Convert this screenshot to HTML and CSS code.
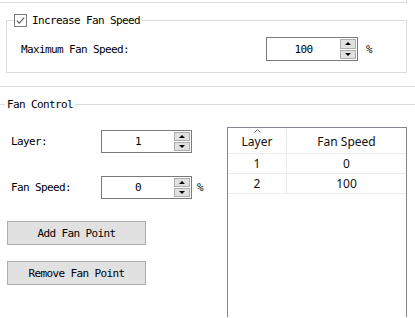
FILE: index.html
```html
<!DOCTYPE html>
<html>
<head>
<meta charset="utf-8">
<link rel="stylesheet" href="styles.css">
</head>
<body>
<div class="prev-box"></div>
<fieldset class="group group-speed">
  <legend class="legend check-legend">
    <svg class="checkbox" width="13" height="13" viewBox="0 0 13 13"><rect x="0.5" y="0.5" width="12" height="12" fill="#fff" stroke="#7a7a7a"/><path d="M2.8 6.6 L5.3 9.1 L10.2 3.6" fill="none" stroke="#5a5a5a" stroke-width="1.1"/></svg>
    <span>Increase Fan Speed</span>
  </legend>
  <div class="row max-row">
    <span class="label label-max">Maximum Fan Speed:</span>
    <div class="spin spin-wide">
      <span class="spin-val">100</span>
      <span class="spin-btns"><span class="sb up"></span><span class="sb down"></span></span>
    </div>
    <span class="unit">%</span>
  </div>
</fieldset>
<div class="sep"></div>
<fieldset class="group group-fan">
  <legend class="legend">Fan Control</legend>
  <div class="fan-body">
    <div class="controls">
      <div class="row ctl-row">
        <span class="label label-ctl">Layer:</span>
        <div class="spin">
          <span class="spin-val">1</span>
          <span class="spin-btns"><span class="sb up"></span><span class="sb down"></span></span>
        </div>
      </div>
      <div class="row ctl-row ctl-row-2">
        <span class="label label-ctl">Fan Speed:</span>
        <div class="spin">
          <span class="spin-val">0</span>
          <span class="spin-btns"><span class="sb up"></span><span class="sb down"></span></span>
        </div>
        <span class="unit unit-small">%</span>
      </div>
      <button class="btn btn-add">Add Fan Point</button>
      <button class="btn btn-remove">Remove Fan Point</button>
    </div>
    <div class="list">
      <table class="grid">
        <thead>
          <tr>
            <th class="col-layer"><svg class="caret" width="7" height="4" viewBox="0 0 7 4"><path d="M0.5 3.5 L3.5 0.5 L6.5 3.5" fill="none" stroke="#7d7d7d" stroke-width="1"/></svg><span class="th-text">Layer</span></th>
            <th class="col-speed"><span class="th-text">Fan Speed</span></th>
          </tr>
        </thead>
        <tbody>
          <tr><td class="cell-layer">1</td><td>0</td></tr>
          <tr><td class="cell-layer">2</td><td>100</td></tr>
        </tbody>
      </table>
    </div>
  </div>
</fieldset>
</body>
</html>
```
FILE: styles.css
```css
html, body {
  margin: 0;
  padding: 0;
}
body {
  width: 415px;
  height: 318px;
  overflow: hidden;
  background: #fff;
  color: #000;
  font-family: "DejaVu Sans Mono", "Liberation Mono", monospace;
  font-size: 11px;
  letter-spacing: -0.62px;
}
.prev-box {
  width: 407px;
  height: 3px;
  box-sizing: border-box;
  border-bottom: 1px solid #dcdcdc;
  border-right: 1px solid #dcdcdc;
}
.group {
  border: 1px solid #dcdcdc;
  min-width: 0;
}
.legend {
  padding: 0 2px 0 0;
  height: 15px;
  line-height: 15px;
  display: flex;
  align-items: center;
  white-space: nowrap;
}
.check-legend {
  gap: 5px;
}
.checkbox {
  display: block;
  flex: none;
}
.group-speed {
  margin: 10px 0 0 6px;
  width: 401px;
  box-sizing: border-box;
  padding: 9px 0 11px 7px;
}
.row {
  display: flex;
  align-items: center;
}
.max-row {
  margin-left: 7px;
}
.label {
  flex: none;
  white-space: nowrap;
}
.label-max {
  width: 245px;
}
.spin {
  flex: none;
  display: flex;
  width: 91px;
  height: 23px;
  box-sizing: border-box;
  border: 1px solid #7a7a7a;
  background: #fff;
  padding: 1px 1px 1px 0;
}
.spin-wide {
  width: 92px;
  height: 24px;
}
.spin-val {
  flex: 1;
  text-align: center;
  align-self: center;
}
.spin-btns {
  display: flex;
  flex-direction: column;
  width: 16px;
}
.sb {
  flex: 1;
  box-sizing: border-box;
  border: 1px solid #adadad;
  background: #e1e1e1;
  display: flex;
  align-items: center;
  justify-content: center;
}
.sb + .sb {
  margin-top: 1px;
}
.sb::before {
  content: "";
  width: 0;
  height: 0;
  border-left: 3px solid transparent;
  border-right: 3px solid transparent;
}
.sb.up::before {
  border-bottom: 3px solid #000;
}
.sb.down::before {
  border-top: 3px solid #000;
}
.unit {
  margin-left: 8px;
}
.unit-small {
  margin-left: 5px;
}
.sep {
  height: 1px;
  background: #dcdcdc;
  margin-top: 13px;
}
.group-fan {
  margin: 10px -3px 0 -3px;
  padding: 0 0 0 7px;
  border-bottom: none;
}
.group-fan .legend {
  padding: 0 2px;
}
.fan-body {
  display: flex;
  padding-top: 15px;
}
.controls {
  width: 222px;
  flex: none;
}
.ctl-row {
  margin: 3px 0 0 6px;
}
.ctl-row-2 {
  margin-top: 23px;
}
.label-ctl {
  width: 90px;
}
.btn {
  display: block;
  width: 139px;
  height: 24px;
  margin: 22px 0 0 2px;
  padding: 0;
  background: #e1e1e1;
  border: 1px solid #adadad;
  font: inherit;
  letter-spacing: inherit;
  color: #000;
}
.btn-remove {
  margin-top: 16px;
}
.list {
  width: 180px;
  height: 190px;
  box-sizing: border-box;
  border: 1px solid #828790;
  border-bottom: none;
  background: #fff;
}
.grid {
  border-collapse: collapse;
  width: 100%;
  font-family: "Noto Sans", "Open Sans", sans-serif;
  font-size: 12px;
  letter-spacing: 0;
  color: #111;
}
.grid th {
  font-weight: normal;
  padding: 0 0 3px 0;
  vertical-align: top;
  text-align: center;
  border-bottom: 1px solid #ececec;
}
.col-layer {
  width: 58px;
  border-right: 1px solid #e5e5e5;
  padding-top: 1px !important;
}
.col-speed {
  padding-top: 5px !important;
}
.caret {
  display: block;
  margin: 0 auto;
}
.th-text {
  display: block;
  line-height: 17px;
}
.grid td {
  height: 19px;
  padding: 0;
  line-height: 19px;
  text-align: center;
  border-bottom: 1px solid #ececec;
}
.cell-layer {
  border-right: 1px solid #ececec;
}
```
